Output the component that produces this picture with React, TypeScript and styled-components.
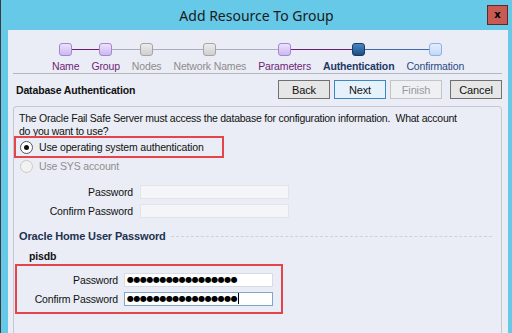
import React from "react";
import styled, { createGlobalStyle, css } from "styled-components";

const GlobalStyle = createGlobalStyle`
  html, body {
    margin: 0;
    padding: 0;
    background: #66c9e8;
  }
  #root {
    width: 512px;
    height: 333px;
    overflow: hidden;
  }
`;

type StepState = "done" | "off" | "current" | "next";

const steps: { label: string; state: StepState }[] = [
  { label: "Name", state: "done" },
  { label: "Group", state: "done" },
  { label: "Nodes", state: "off" },
  { label: "Network Names", state: "off" },
  { label: "Parameters", state: "done" },
  { label: "Authentication", state: "current" },
  { label: "Confirmation", state: "next" },
];

const lineColor = (a: StepState, b: StepState) => {
  if (a === "current" || b === "current") {
    return a === "done" ? "#6b1d72" : "#3d6cb3";
  }
  if (a === "done" && b === "done") return "#6b1d72";
  return "#a9adc2";
};

const nodeStyles: Record<StepState, ReturnType<typeof css>> = {
  done: css`
    background: linear-gradient(#ece2fb, #cdb8f0);
    border-color: #a386d6;
  `,
  off: css`
    background: linear-gradient(#ececec, #cfcfcf);
    border-color: #a5a5a5;
  `,
  current: css`
    background: linear-gradient(#4c86c4, #1c4e86);
    border-color: #173a66;
  `,
  next: css`
    background: linear-gradient(#e4eefd, #c3d8f6);
    border-color: #8db1e6;
  `,
};

const labelStyles: Record<StepState, ReturnType<typeof css>> = {
  done: css`
    color: #6e1f76;
  `,
  off: css`
    color: #8c8c8c;
  `,
  current: css`
    color: #1d3868;
    font-weight: bold;
  `,
  next: css`
    color: #2a4a86;
  `,
};

const Frame = styled.div`
  width: 512px;
  height: 333px;
  display: flex;
  flex-direction: column;
  background: #66c9e8;
  border-left: 1px solid #3b3b3b;
  box-sizing: border-box;
  font-family: "Liberation Sans", Arial, sans-serif;
  font-size: 10.5px;
  letter-spacing: -0.15px;
  color: #111;
`;

const TitleBar = styled.div`
  height: 30px;
  flex-shrink: 0;
  display: flex;
  align-items: center;
  justify-content: center;
  position: relative;
`;

const Title = styled.div`
  font-family: "Noto Sans", "Open Sans", sans-serif;
  font-size: 14px;
  letter-spacing: 0;
  color: #1a1a1a;
`;

const CloseButton = styled.div`
  position: absolute;
  right: 4px;
  top: 5px;
  width: 19px;
  height: 18px;
  background: #c75a52;
  border: 1px solid #5a2a2a;
  display: flex;
  align-items: center;
  justify-content: center;
  font-family: "DejaVu Sans", sans-serif;
  font-weight: bold;
  font-size: 10px;
  color: #000;
  line-height: 1;
`;

const Content = styled.div`
  flex: 1;
  margin: 0 4px 0 7px;
  background: #eaedf5;
  display: flex;
  flex-direction: column;
  padding: 0 6px 0 5px;
  min-height: 0;
`;

const Stepper = styled.div`
  display: flex;
  padding: 13px 0 0 33px;
  height: 44px;
  box-sizing: border-box;
  border-bottom: 1px solid #b4b6bd;
`;

const Step = styled.div`
  display: flex;
  flex-direction: column;
  align-items: stretch;
`;

const NodeRow = styled.div`
  display: flex;
  align-items: center;
  height: 13px;
`;

const Line = styled.div<{ $color?: string }>`
  flex: 1;
  height: 1px;
  background: ${(p) => p.$color || "transparent"};
`;

const Node = styled.div<{ $state: StepState }>`
  width: 11px;
  height: 11px;
  border: 1px solid;
  border-radius: 3px;
  flex-shrink: 0;
  ${(p) => nodeStyles[p.$state]}
`;

const StepLabel = styled.div<{ $state: StepState }>`
  padding: 4px 6px 0;
  white-space: nowrap;
  ${(p) => labelStyles[p.$state]}
`;

const HeaderRow = styled.div`
  display: flex;
  align-items: center;
  margin-top: 6px;
  height: 19px;
`;

const SectionTitle = styled.div`
  flex: 1;
  font-weight: bold;
  padding-left: 3px;
  color: #111;
`;

const Button = styled.div<{ $primary?: boolean; $disabled?: boolean }>`
  width: 50px;
  height: 17px;
  margin-left: 4px;
  border: 1px solid ${(p) => (p.$primary ? "#3d86c6" : p.$disabled ? "#c4c4c4" : "#707070")};
  background: ${(p) => (p.$primary ? "#e5f1fb" : p.$disabled ? "#eef0f4" : "#e6e6e6")};
  color: ${(p) => (p.$disabled ? "#9a9a9a" : "#111")};
  display: flex;
  align-items: center;
  justify-content: center;
  font-size: 11px;
  &:last-child {
    margin-left: 8px;
  }
`;

const GroupBox = styled.div`
  flex: 1;
  margin-top: 7px;
  border: 1px solid #c6c8cf;
  border-bottom: none;
  border-radius: 4px 4px 0 0;
  padding: 5px 5px 0 5px;
  display: flex;
  flex-direction: column;
`;

const Paragraph = styled.div`
  line-height: 13px;
  letter-spacing: -0.24px;
`;

const Highlight = styled.div<{ $width: number }>`
  width: ${(p) => p.$width}px;
  border: 2px solid #e3454a;
  box-sizing: border-box;
`;

const RadioRow = styled.div<{ $disabled?: boolean; $height: number }>`
  display: flex;
  align-items: center;
  height: ${(p) => p.$height}px;
  color: ${(p) => (p.$disabled ? "#8e8e8e" : "#111")};
`;

const Radio = styled.div<{ $checked?: boolean; $disabled?: boolean }>`
  width: 11px;
  height: 11px;
  border-radius: 50%;
  border: 1px solid ${(p) => (p.$disabled ? "#c9c9c9" : "#555")};
  background: ${(p) => (p.$disabled ? "#f2f2f2" : "#fff")};
  margin-right: 6px;
  display: flex;
  align-items: center;
  justify-content: center;
  &::after {
    content: "";
    width: 5px;
    height: 5px;
    border-radius: 50%;
    background: #111;
    display: ${(p) => (p.$checked ? "block" : "none")};
  }
`;

const Spacer = styled.div<{ $h: number }>`
  height: ${(p) => p.$h}px;
  flex-shrink: 0;
`;

const FieldRow = styled.div<{ $labelWidth: number; $gap: number }>`
  display: grid;
  grid-template-columns: ${(p) => p.$labelWidth}px 149px;
  column-gap: ${(p) => p.$gap}px;
  align-items: center;
  height: 19px;
`;

const FieldLabel = styled.div`
  text-align: right;
  white-space: nowrap;
`;

const Input = styled.div<{ $disabled?: boolean; $focused?: boolean }>`
  height: 12px;
  border: 1px solid
    ${(p) => (p.$focused ? "#7fa6cf" : p.$disabled ? "#e2e4ea" : "#d6dbe6")};
  background: ${(p) => (p.$disabled ? "#f4f5f9" : "#fff")};
  display: flex;
  align-items: center;
  padding-left: 2px;
  font-family: "DejaVu Sans", sans-serif;
  font-size: 8px;
  letter-spacing: -0.5px;
  color: #000;
  overflow: hidden;
`;

const Caret = styled.span`
  display: inline-block;
  width: 1px;
  height: 11px;
  background: #000;
  margin-left: 1px;
`;

const SubHeading = styled.div`
  display: flex;
  align-items: center;
  font-weight: bold;
  color: #1d3350;
  font-size: 11px;
  height: 16px;
  &::after {
    content: "";
    flex: 1;
    margin-left: 5px;
    margin-right: 4px;
    border-top: 1px dashed #cfd1d6;
  }
`;

const NodeName = styled.div`
  font-weight: bold;
  padding-left: 10px;
  height: 16px;
  display: flex;
  align-items: center;
`;

const dots = "\u25CF".repeat(17);

export default function App() {
  return (
    <>
      <GlobalStyle />
      <Frame>
        <TitleBar>
          <Title>Add Resource To Group</Title>
          <CloseButton>x</CloseButton>
        </TitleBar>
        <Content>
          <Stepper>
            {steps.map((s, i) => (
              <Step key={s.label}>
                <NodeRow>
                  <Line $color={i > 0 ? lineColor(steps[i - 1].state, s.state) : undefined} />
                  <Node $state={s.state} />
                  <Line
                    $color={i < steps.length - 1 ? lineColor(s.state, steps[i + 1].state) : undefined}
                  />
                </NodeRow>
                <StepLabel $state={s.state}>{s.label}</StepLabel>
              </Step>
            ))}
          </Stepper>
          <HeaderRow>
            <SectionTitle>Database Authentication</SectionTitle>
            <Button>Back</Button>
            <Button $primary>Next</Button>
            <Button $disabled>Finish</Button>
            <Button>Cancel</Button>
          </HeaderRow>
          <GroupBox>
            <Paragraph>
              The Oracle Fail Safe Server must access the database for configuration information.&nbsp; What account
              <br />
              do you want to use?
            </Paragraph>
            <Highlight $width={210} style={{ marginLeft: -5, marginTop: -2, padding: "0 4px" }}>
              <RadioRow $height={18}>
                <Radio $checked />
                Use operating system authentication
              </RadioRow>
            </Highlight>
            <RadioRow $disabled $height={16} style={{ paddingLeft: 1 }}>
              <Radio $disabled />
              Use SYS account
            </RadioRow>
            <Spacer $h={8} />
            <FieldRow $labelWidth={114} $gap={7}>
              <FieldLabel>Password</FieldLabel>
              <Input $disabled />
            </FieldRow>
            <FieldRow $labelWidth={114} $gap={7}>
              <FieldLabel>Confirm Password</FieldLabel>
              <Input $disabled />
            </FieldRow>
            <Spacer $h={8} />
            <SubHeading>Oracle Home User Password</SubHeading>
            <Spacer $h={4} />
            <NodeName>pisdb</NodeName>
            <Highlight $width={268} style={{ marginLeft: -4, padding: "4px 0 4px 0" }}>
              <FieldRow $labelWidth={101} $gap={6}>
                <FieldLabel>Password</FieldLabel>
                <Input>{dots}</Input>
              </FieldRow>
              <FieldRow $labelWidth={101} $gap={6}>
                <FieldLabel>Confirm Password</FieldLabel>
                <Input $focused>
                  {dots}
                  <Caret />
                </Input>
              </FieldRow>
            </Highlight>
          </GroupBox>
        </Content>
      </Frame>
    </>
  );
}
